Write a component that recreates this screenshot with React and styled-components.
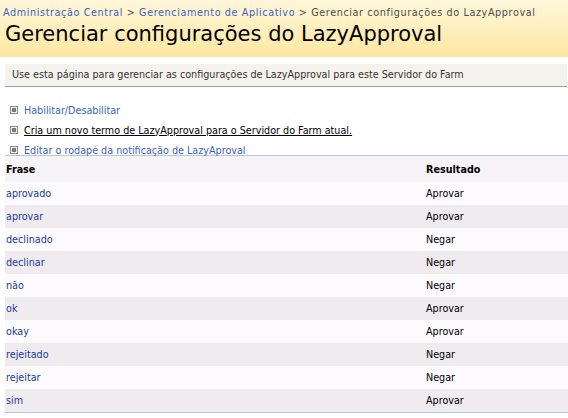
import React from "react";
import styled, { createGlobalStyle } from "styled-components";

const Global = createGlobalStyle`
  html, body { margin: 0; padding: 0; background: #fff; }
  body { font-family: "DejaVu Sans Condensed", "DejaVu Sans", sans-serif; font-size: 10.7px; color: #000; }
`;

const Header = styled.header`
  height: 57px;
  box-sizing: border-box;
  padding: 6px 0 0 3px;
  background: linear-gradient(to bottom, #fff7dc 0%, #fef0c0 45%, #fee7a0 100%);
`;

const Crumbs = styled.div`
  font-size: 10.7px;
  letter-spacing: 0.62px;
  line-height: 14px;
  color: #4d4d4d;
  white-space: nowrap;
`;

const CrumbLink = styled.a`
  color: #3b63c5;
  text-decoration: none;
`;

const Title = styled.h1`
  margin: 0;
  padding-left: 2px;
  font-family: "DejaVu Sans", sans-serif;
  font-size: 21px;
  font-weight: normal;
  line-height: 28px;
  white-space: nowrap;
`;

const Description = styled.div`
  margin: 7px 1px 0 5px;
  height: 22px;
  line-height: 22px;
  padding-left: 7px;
  background: #f5f3ee;
  border-bottom: 1px solid #a49b94;
  color: #333;
`;

const LinkList = styled.ul`
  list-style: none;
  margin: 0;
  height: 68px;
  box-sizing: border-box;
  padding: 13px 0 0 10px;
`;

const LinkItem = styled.li`
  display: flex;
  align-items: center;
  gap: 6px;
  height: 20px;
`;

const ActionLink = styled.a`
  color: ${(p) => (p.$active ? "#000" : "#3b63c5")};
  text-decoration: ${(p) => (p.$active ? "underline" : "none")};
  white-space: nowrap;
`;

const Table = styled.table`
  margin-left: 5px;
  width: calc(100% - 5px);
  border-collapse: collapse;
  border-top: 1px solid #b4c6e2;
  border-bottom: 1px solid #a8c6ee;
`;

const HeadCell = styled.th`
  height: 25px;
  padding: 1px 1px 0;
  text-align: left;
  font-weight: bold;
  background: #f7f4f7;
  width: ${(p) => p.$w || "auto"};
`;

const Row = styled.tr`
  background: ${(p) => (p.$alt ? "#efebef" : "#fdfafd")};
`;

const Cell = styled.td`
  height: 23px;
  padding: 0 1px;
  white-space: nowrap;
`;

const PhraseLink = styled.a`
  color: #1a3b9c;
  text-decoration: none;
`;

const Bullet = () => (
  <svg width="8" height="8" viewBox="0 0 8 8" aria-hidden="true">
    <rect x="0.5" y="0.5" width="7" height="7" fill="#f2f2f2" stroke="#8c8c8c" />
    <rect x="2" y="2" width="4" height="4" fill="#7a7a7a" />
  </svg>
);

const rows = [
  ["aprovado", "Aprovar"],
  ["aprovar", "Aprovar"],
  ["declinado", "Negar"],
  ["declinar", "Negar"],
  ["não", "Negar"],
  ["ok", "Aprovar"],
  ["okay", "Aprovar"],
  ["rejeitado", "Negar"],
  ["rejeitar", "Negar"],
  ["sim", "Aprovar"],
];

export default function App() {
  return (
    <>
      <Global />
      <Header>
        <Crumbs>
          <CrumbLink href="#">Administração Central</CrumbLink> &gt;{" "}
          <CrumbLink href="#">Gerenciamento de Aplicativo</CrumbLink> &gt; Gerenciar configurações do LazyApproval
        </Crumbs>
        <Title>Gerenciar configurações do LazyApproval</Title>
      </Header>
      <Description>
        Use esta página para gerenciar as configurações de LazyApproval para este Servidor do Farm
      </Description>
      <LinkList>
        <LinkItem>
          <Bullet />
          <ActionLink href="#">Habilitar/Desabilitar</ActionLink>
        </LinkItem>
        <LinkItem>
          <Bullet />
          <ActionLink href="#" $active>
            Cria um novo termo de LazyApproval para o Servidor do Farm atual.
          </ActionLink>
        </LinkItem>
        <LinkItem>
          <Bullet />
          <ActionLink href="#">Editar o rodapé da notificação de LazyAproval</ActionLink>
        </LinkItem>
      </LinkList>
      <Table>
        <thead>
          <tr>
            <HeadCell $w="418px">Frase</HeadCell>
            <HeadCell>Resultado</HeadCell>
          </tr>
        </thead>
        <tbody>
          {rows.map(([p, r], i) => (
            <Row key={p} $alt={i % 2 === 1}>
              <Cell>
                <PhraseLink href="#">{p}</PhraseLink>
              </Cell>
              <Cell>{r}</Cell>
            </Row>
          ))}
        </tbody>
      </Table>
    </>
  );
}
